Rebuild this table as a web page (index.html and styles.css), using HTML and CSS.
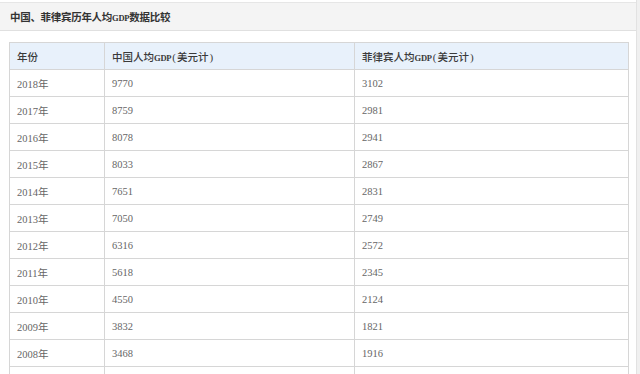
FILE: index.html
```html
<!DOCTYPE html>
<html lang="zh">
<head>
<meta charset="utf-8">
<link rel="stylesheet" href="styles.css">
</head>
<body>
<div class="page">
  <div class="panel">
    <div class="titlebar">中国、菲律宾历年人均<span class="abbr">GDP</span>数据比较</div>
    <div class="content">
      <table class="data">
        <colgroup><col class="c1"><col class="c2"><col class="c3"></colgroup>
        <thead>
          <tr><th>年份</th><th>中国人均<span class="abbr">GDP</span><span class="paren">(</span>美元计<span class="paren">)</span></th><th>菲律宾人均<span class="abbr">GDP</span><span class="paren">(</span>美元计<span class="paren">)</span></th></tr>
        </thead>
        <tbody>
          <tr><td>2018年</td><td>9770</td><td>3102</td></tr>
          <tr><td>2017年</td><td>8759</td><td>2981</td></tr>
          <tr><td>2016年</td><td>8078</td><td>2941</td></tr>
          <tr><td>2015年</td><td>8033</td><td>2867</td></tr>
          <tr><td>2014年</td><td>7651</td><td>2831</td></tr>
          <tr><td>2013年</td><td>7050</td><td>2749</td></tr>
          <tr><td>2012年</td><td>6316</td><td>2572</td></tr>
          <tr><td>2011年</td><td>5618</td><td>2345</td></tr>
          <tr><td>2010年</td><td>4550</td><td>2124</td></tr>
          <tr><td>2009年</td><td>3832</td><td>1821</td></tr>
          <tr><td>2008年</td><td>3468</td><td>1916</td></tr>
          <tr><td></td><td></td><td></td></tr>
        </tbody>
      </table>
    </div>
  </div>
</div>
</body>
</html>
```
FILE: styles.css
```css
html, body {
  margin: 0;
  padding: 0;
  background: #f0f0f0;
}
body {
  font-family: "Noto Sans CJK SC", "Liberation Serif", serif;
  overflow: hidden;
  height: 374px;
}
.page {
  width: 636px;
  height: 374px;
  background: #fff;
  border-right: 1px solid #e2e2e2;
}
.panel {
  padding-top: 2px;
}
.titlebar {
  height: 27px;
  line-height: 27px;
  background: #f4f4f4;
  border-top: 1px solid #e6e6e6;
  border-bottom: 1px solid #e0e0e0;
  padding-left: 10px;
  font-size: 10.5px;
  font-weight: 600;
  color: #333;
  letter-spacing: -0.3px;
}
.abbr {
  font-family: "Liberation Serif", serif;
  font-size: 8.5px;
  font-weight: bold;
  letter-spacing: -0.2px;
}
.paren {
  font-family: "Liberation Serif", serif;
  font-size: 11px;
  padding: 0 1px;
}
.content {
  padding: 11px 0 0 9px;
}
.data {
  border-collapse: collapse;
  width: 619px;
  table-layout: fixed;
  font-size: 10.5px;
  color: #666;
}
.c1 { width: 95px; }
.c2 { width: 250px; }
.c3 { width: 274px; }
.data th, .data td {
  border: 1px solid #d6d6d6;
  padding: 0 0 0 7px;
  text-align: left;
  box-sizing: border-box;
  height: 27px;
}
.data th {
  background: #e8f1fb;
  color: #3a3a3a;
  font-weight: 500;
}
.data td {
  font-family: "Liberation Serif", "Noto Sans CJK SC", serif;
  font-size: 10.5px;
}
```
